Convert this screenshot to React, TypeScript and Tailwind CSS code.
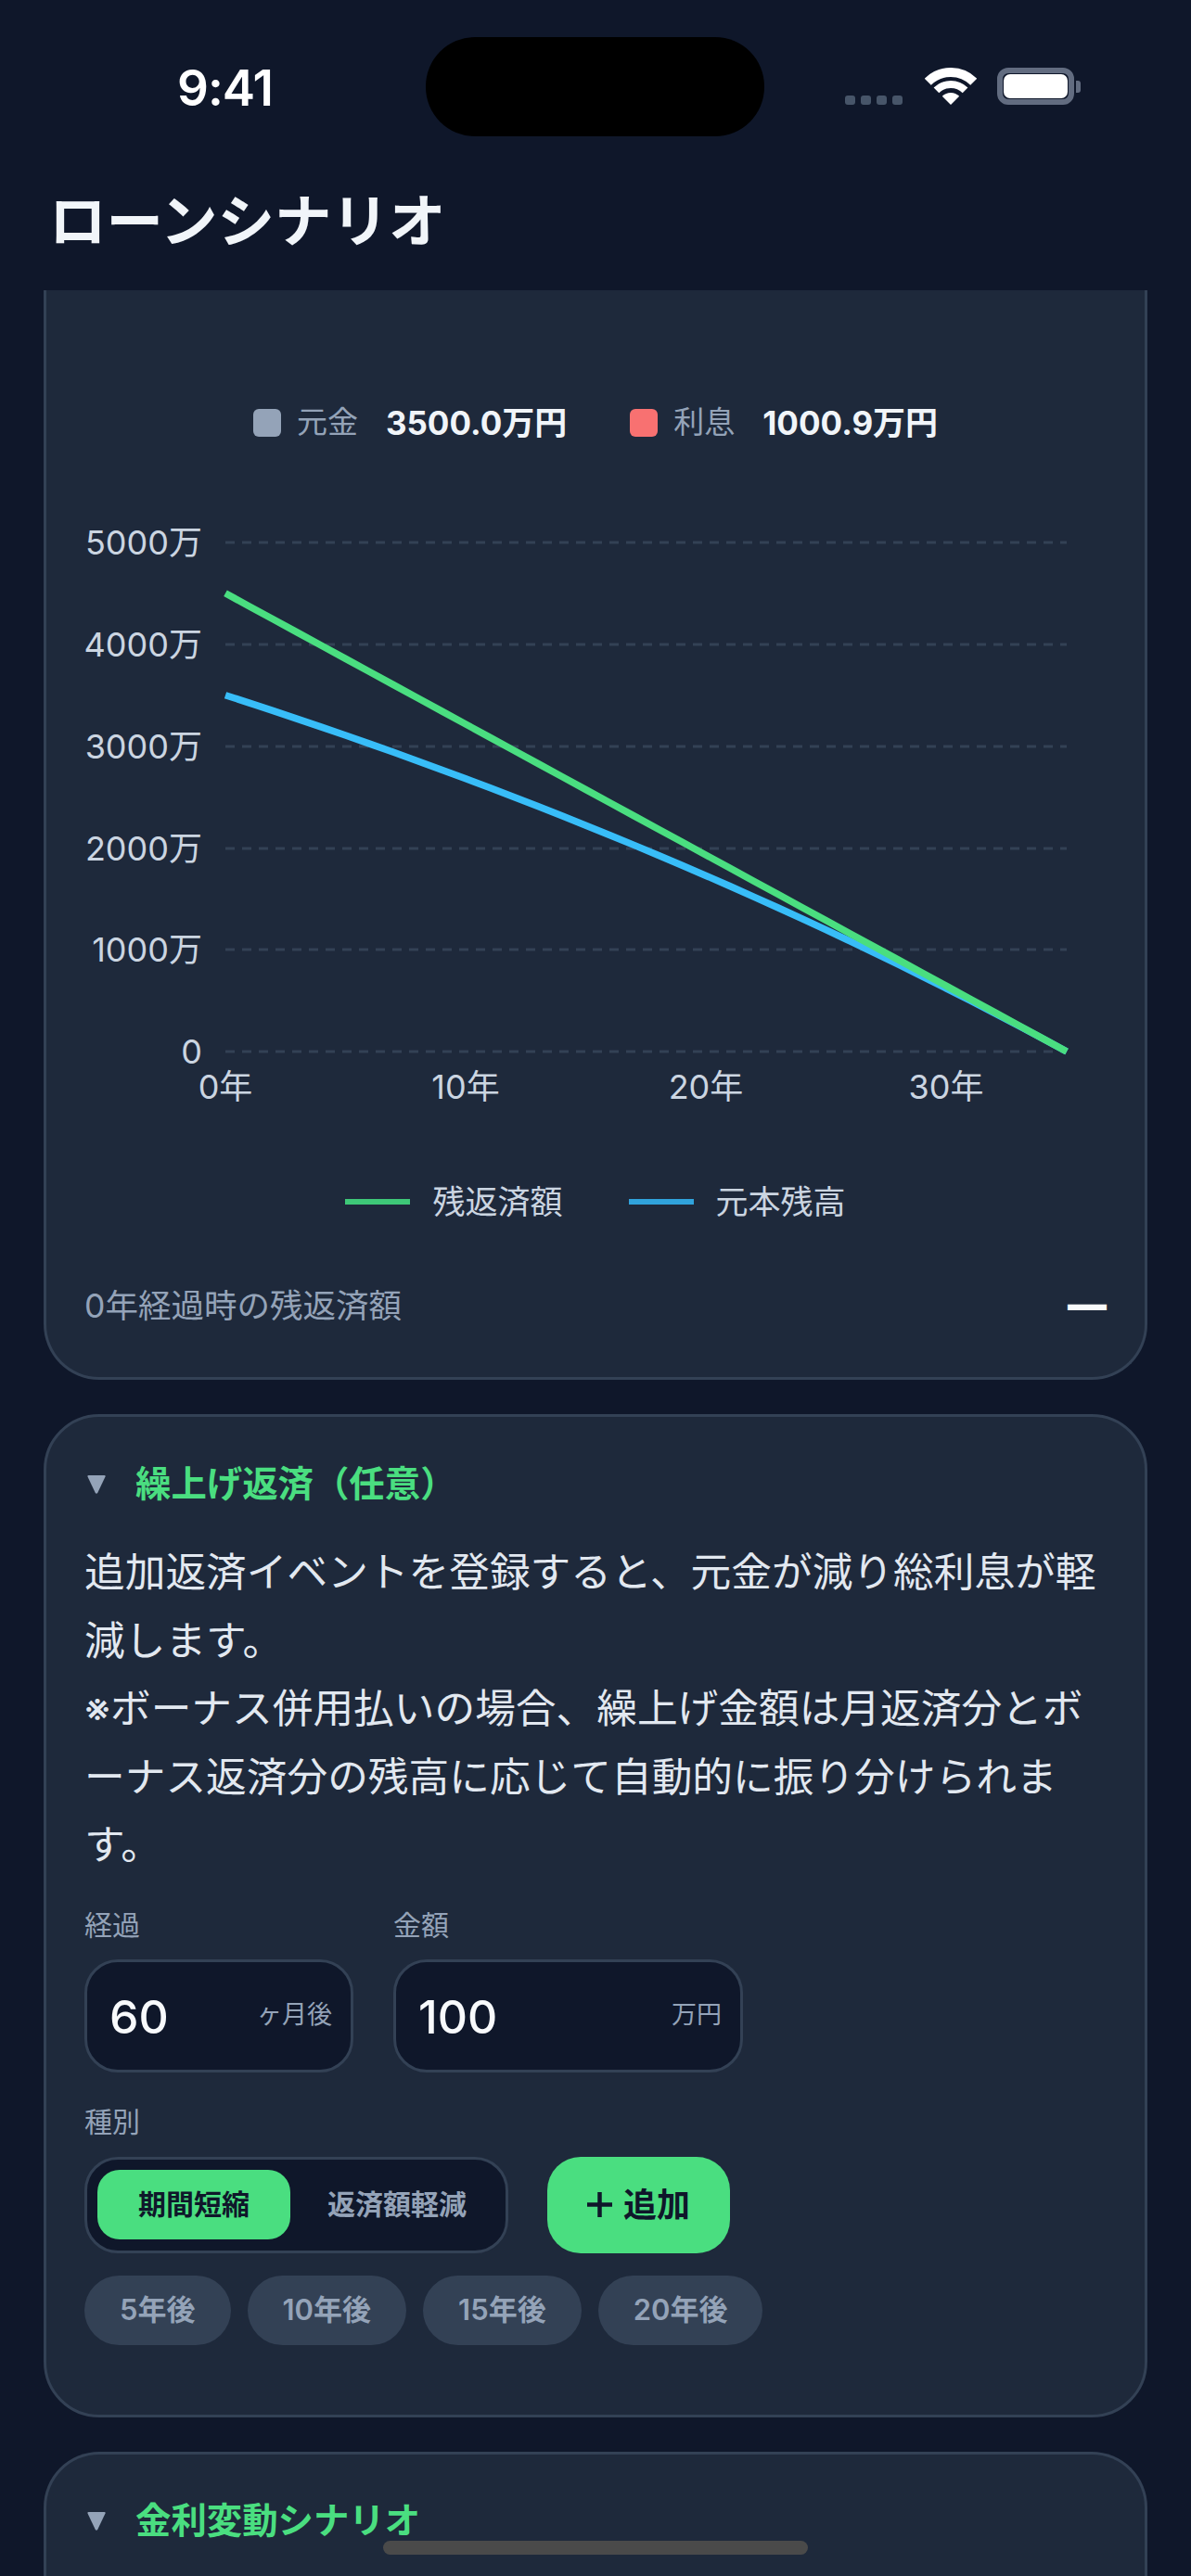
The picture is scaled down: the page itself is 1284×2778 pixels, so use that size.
const payment = (3500 * 0.00125) / (1 - Math.pow(1.00125, -420));

const xAt = (month: number) => 243 + (month / 420) * 907;
const yAt = (value: number) => 1134 - value * 0.1098;

const months = Array.from({ length: 36 }, (_, i) => i * 12);
const remainingLine = months.map((m) => `${xAt(m)},${yAt(payment * (420 - m))}`).join(' ');
const principalLine = months
  .map((m) => `${xAt(m)},${yAt((payment * (1 - Math.pow(1.00125, m - 420))) / 0.00125)}`)
  .join(' ');

const yTicks = [
  { label: '5000万', y: 585 },
  { label: '4000万', y: 695 },
  { label: '3000万', y: 805 },
  { label: '2000万', y: 915 },
  { label: '1000万', y: 1024 },
  { label: '0', y: 1134 },
];
const xTicks = [
  { label: '0年', x: 243 },
  { label: '10年', x: 502 },
  { label: '20年', x: 761 },
  { label: '30年', x: 1020 },
];
const chips = ['5年後', '10年後', '15年後', '20年後'];

const StatusBar = () => (
  <div className="flex h-[170px] items-start">
    <div className="w-[459px] pl-[191px] pt-[66px] text-[53px] leading-[58px] font-semibold tracking-[-1px] text-white">9:41</div>
    <div className="mt-[40px] h-[107px] w-[365px] rounded-[53px] bg-black" />
    <div className="flex h-[113px] items-end pl-[87px]">
      <div className="flex gap-[6px]">
        <div className="h-[10px] w-[11px] rounded-[3px] bg-[#475569]" />
        <div className="h-[10px] w-[11px] rounded-[3px] bg-[#475569]" />
        <div className="h-[10px] w-[11px] rounded-[3px] bg-[#475569]" />
        <div className="h-[10px] w-[11px] rounded-[3px] bg-[#475569]" />
      </div>
      <svg className="ml-[24px]" width="56" height="40" viewBox="0 0 56 40" fill="none">
        <path d="M3.25 15.25A35 35 0 0 1 52.75 15.25" stroke="#fff" strokeWidth="10" />
        <path d="M12.44 24.44A22 22 0 0 1 43.56 24.44" stroke="#fff" strokeWidth="8" />
        <path d="M28 40L18.8 30.8A13 13 0 0 1 37.2 30.8Z" fill="#fff" />
      </svg>
      <div className="ml-[22px] flex items-center">
        <div className="h-[40px] w-[83px] rounded-[12px] border-[6px] border-[#626c80] p-[1px]">
          <div className="h-full w-full rounded-[7px] bg-white" />
        </div>
        <div className="ml-[2px] h-[13px] w-[5px] rounded-r-[3px] bg-[#626c80]" />
      </div>
    </div>
  </div>
);

const SectionTitle = ({ title }: { title: string }) => (
  <div className="flex h-[54px] items-center">
    <svg className="ml-[3px] mr-[32px]" width="20" height="20" viewBox="0 0 20 20">
      <path d="M1.5 0H18.5Q20 0 19.5 1.5L11.2 19Q10 20.5 8.8 19L0.5 1.5Q0 0 1.5 0Z" fill="#94a3b8" />
    </svg>
    <span className="text-[38.4px] font-bold text-[#4ade80]">{title}</span>
  </div>
);

const LegendAmount = ({ color, label, amount }: { color: string; label: string; amount: string }) => (
  <div className="flex items-center">
    <div className={`h-[30px] w-[30px] rounded-[6px] ${color}`} />
    <span className="ml-[17px] text-[33px] text-[#94a3b8]">{label}</span>
    <span className="ml-[30px] text-[35px] font-bold text-[#f1f5f9]">{amount}</span>
  </div>
);

const NumberField = ({ label, value, unit, width }: { label: string; value: string; unit: string; width: string }) => (
  <div>
    <div className="h-[40px] text-[30px] leading-[40px] text-[#94a3b8]">{label}</div>
    <div className={`mt-[17px] flex h-[122px] items-center justify-between rounded-[36px] border-[3px] border-[#334155] bg-[#0f172a] pl-[24px] pr-[20px] ${width}`}>
      <span className="pt-[4px] text-[50px] font-medium text-[#f8fafc]">{value}</span>
      <span className="text-[27px] text-[#94a3b8]">{unit}</span>
    </div>
  </div>
);

export default function App() {
  return (
    <div className="relative flex h-[2778px] w-[1284px] flex-col overflow-hidden bg-[#0f172a] font-[Inter,'Noto_Sans_CJK_JP',sans-serif]">
      <StatusBar />
      <header className="flex h-[143px] items-center pb-[5px] pl-[53px]">
        <h1 className="text-[61.5px] leading-[70px] font-bold text-[#f1f5f9]">ローンシナリオ</h1>
      </header>

      <main className="flex flex-1 flex-col gap-[37px] overflow-hidden px-[47px]">
        {/* top of this card is scrolled under the header */}
        <section className="rounded-b-[60px] border-x-[3px] border-b-[3px] border-[#334155] bg-[#1e293b] pb-[49px] pt-[113px]">
          <div className="flex h-[60px] items-center justify-center gap-[68px]">
            <LegendAmount color="bg-[#94a3b8]" label="元金" amount="3500.0万円" />
            <LegendAmount color="bg-[#f87171]" label="利息" amount="1000.9万円" />
          </div>

          <svg className="mt-[54px] block" width="1184" height="680" viewBox="50 540 1184 680">
            {yTicks.map((t) => (
              <g key={t.label}>
                <line x1="243" x2="1150" y1={t.y} y2={t.y} stroke="#334155" strokeWidth="3" strokeDasharray="10 8" />
                <text x="218" y={t.y + 13} textAnchor="end" fontSize="36" fill="#cbd5e1">{t.label}</text>
              </g>
            ))}
            {xTicks.map((t) => (
              <text key={t.label} x={t.x} y="1185" textAnchor="middle" fontSize="36" fill="#cbd5e1">{t.label}</text>
            ))}
            <polyline points={principalLine} fill="none" stroke="#38bdf8" strokeWidth="7.5" />
            <polyline points={remainingLine} fill="none" stroke="#4ade80" strokeWidth="7.5" />
          </svg>

          <div className="mt-[51px] flex h-[50px] items-center justify-center gap-[71px]">
            <div className="flex items-center gap-[24px]">
              <div className="h-[6px] w-[70px] bg-[#3ec878]" />
              <span className="text-[35px] text-[#cbd5e1]">残返済額</span>
            </div>
            <div className="flex items-center gap-[24px]">
              <div className="h-[6px] w-[70px] bg-[#30a3dc]" />
              <span className="text-[35px] text-[#cbd5e1]">元本残高</span>
            </div>
          </div>

          <div className="mt-[61px] flex h-[54px] items-center justify-between px-[41px]">
            <span className="text-[35.5px] text-[#94a3b8]">0年経過時の残返済額</span>
            <span className="pb-[6px] text-[42px] font-black text-[#f8fafc]">—</span>
          </div>
        </section>

        <section className="rounded-[60px] border-[3px] border-[#334155] bg-[#1e293b] px-[41px] pb-[75px] pt-[46px]">
          <SectionTitle title="繰上げ返済（任意）" />
          <p className="mt-[31px] text-[43.7px] leading-[73.5px] text-[#e2e8f0]">
            追加返済イベントを登録すると、元金が減り総利息が軽減します。
            <br />
            ※ボーナス併用払いの場合、繰上げ金額は月返済分とボーナス返済分の残高に応じて自動的に振り分けられます。
          </p>

          <div className="mt-[29px] flex gap-[43px]">
            <NumberField label="経過" value="60" unit="ヶ月後" width="w-[290px]" />
            <NumberField label="金額" value="100" unit="万円" width="w-[377px]" />
          </div>

          <div className="mt-[33px] h-[40px] text-[30px] leading-[40px] text-[#94a3b8]">種別</div>
          <div className="mt-[18px] flex gap-[42px]">
            <div className="flex h-[104px] w-[457px] items-center rounded-[36px] border-[3px] border-[#334155] bg-[#0f172a] pl-[11px]">
              <div className="flex h-[75px] w-[208px] items-center justify-center rounded-[24px] bg-[#4ade80] text-[30px] font-semibold text-[#0f172a]">期間短縮</div>
              <div className="flex h-[75px] w-[230px] items-center justify-center text-[30px] font-semibold text-[#94a3b8]">返済額軽減</div>
            </div>
            <button className="flex h-[104px] w-[197px] items-center justify-center gap-[12px] rounded-[36px] bg-[#4ade80] text-[36px] font-bold text-[#0f172a]">
              <svg width="27" height="27" viewBox="0 0 27 27">
                <path d="M13.5 0V27M0 13.5H27" stroke="#0f172a" strokeWidth="4.5" />
              </svg>
              追加
            </button>
          </div>

          <div className="mt-[24px] flex gap-[18px]">
            {chips.map((chip) => (
              <div key={chip} className="flex h-[75px] items-center rounded-full bg-[#334155] px-[38px] text-[31px] font-semibold text-[#94a3b8]">
                {chip}
              </div>
            ))}
          </div>
        </section>

        <section className="flex-1 rounded-t-[60px] border-x-[3px] border-t-[3px] border-[#334155] bg-[#1e293b] px-[41px] pt-[45px]">
          <SectionTitle title="金利変動シナリオ" />
        </section>
      </main>

      <div className="absolute bottom-[23px] left-[413px] h-[15px] w-[458px] rounded-full bg-[#4a4a4a]" />
    </div>
  );
}
